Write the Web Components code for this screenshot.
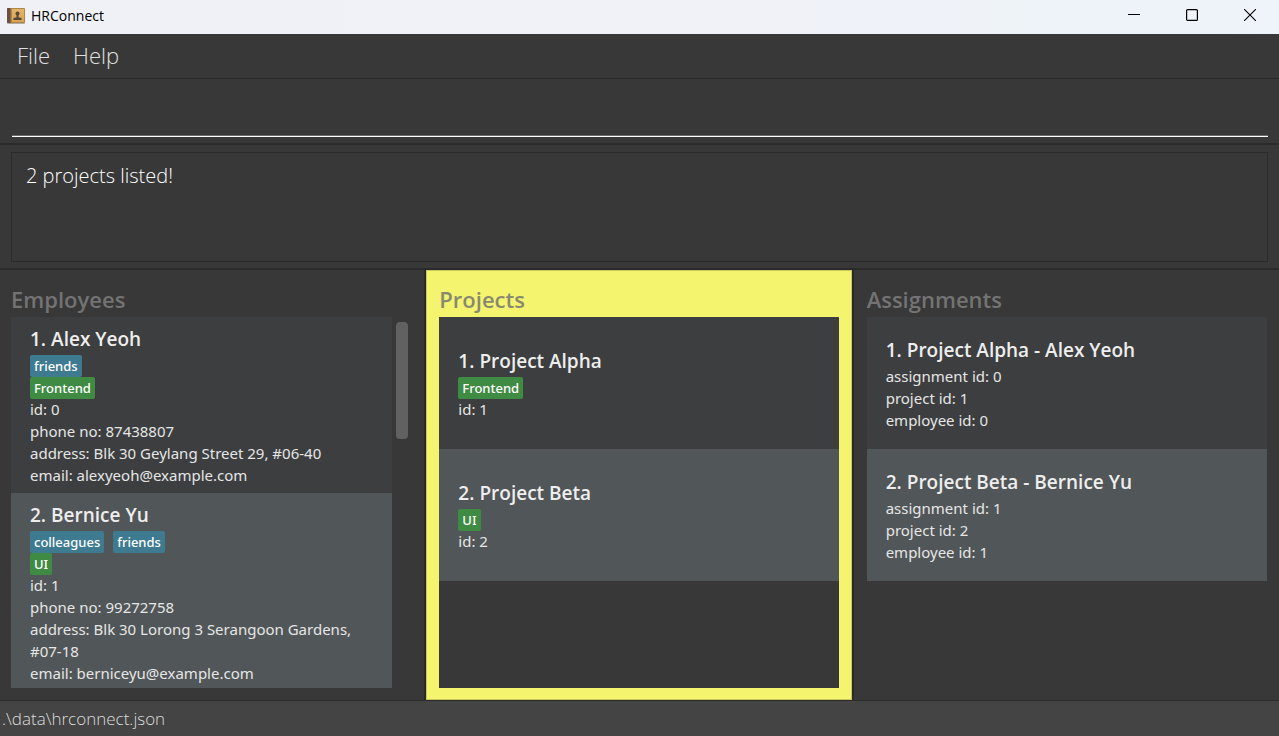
<!DOCTYPE html>
<html lang="en">
<head>
<meta charset="utf-8">
<title>HRConnect</title>
<style>
  html, body { margin: 0; height: 100%; }
  body {
    background: #383838;
    font-family: "Open Sans", "Noto Sans", sans-serif;
    color: #e6e6e6;
  }
</style>
</head>
<body>
<hr-app></hr-app>

<script>
function define(name, html, setup) {
  const template = document.createElement('template');
  template.innerHTML = html;
  customElements.define(name, class extends HTMLElement {
    constructor() {
      super();
      this.attachShadow({ mode: 'open' }).append(template.content.cloneNode(true));
    }
    connectedCallback() {
      if (setup) setup(this, this.shadowRoot);
    }
  });
}

define('hr-titlebar', `
  <style>
    :host { display: flex; align-items: center; height: 34px; flex: none; color: #000;
      background: linear-gradient(90deg, #f0f1f7 0%, #f0f2f8 60%, #edf3f8 85%, #eff3fa 100%); }
    .logo { margin: 0 6px 2px 7px; }
    .name { flex: 1; font-size: 14px; line-height: 20px; margin-bottom: 3px; }
    button { width: 58px; height: 34px; padding: 0 0 4px; border: 0; background: none; display: grid; place-items: center; }
    svg { display: block; }
  </style>
  <svg class="logo" width="18" height="18" viewBox="0 0 18 18" aria-hidden="true">
    <defs><linearGradient id="cover" x1="0" y1="0" x2="0" y2="1"><stop offset="0" stop-color="#e3b568"/><stop offset="1" stop-color="#d9a450"/></linearGradient></defs>
    <rect x="0" y="15" width="18" height="2" rx="1" fill="#b3aca3"/>
    <rect x="0" y="1" width="18" height="15" rx="1" fill="#b08545"/>
    <path d="M1 1h3v15H1a1 1 0 0 1-1-1V2a1 1 0 0 1 1-1z" fill="#6a5142"/>
    <rect x="3" y="1" width="1" height="15" fill="#8a6a48"/>
    <rect x="5" y="2" width="12" height="13" fill="url(#cover)"/>
    <circle cx="10.500" cy="6.500" r="2" fill="#54483a"/>
    <path d="M9.500 8h2v2.200l3 .8v2h-8v-2l3-.8z" fill="#54483a"/>
  </svg>
  <span class="name"><slot></slot></span>
  <button aria-label="Minimize"><svg width="12" height="12" viewBox="0 0 12 12"><path d="M0 5.500h12" stroke="#000"/></svg></button>
  <button aria-label="Maximize"><svg width="12" height="12" viewBox="0 0 12 12"><rect x=".6" y=".6" width="10.800" height="10.800" rx="1" fill="none" stroke="#000" stroke-width="1.200"/></svg></button>
  <button aria-label="Close"><svg width="12" height="12" viewBox="0 0 12 12"><path d="M0 0l12 12M12 0L0 12" stroke="#000" stroke-width="1.100"/></svg></button>
`);

define('hr-menubar', `
  <style>
    :host { display: flex; gap: 23px; align-items: flex-start; box-sizing: border-box; height: 45px; flex: none; padding: 6px 17px 0; border-bottom: 1px solid #2b2b2b; }
    button { border: 0; padding: 0; background: none; color: #e0e0e0; font: 300 22px/30px "Open Sans", sans-serif; }
  </style>
  <button>File</button><button>Help</button>
`);

define('hr-command', `
  <style>
    :host { display: block; flex: none; padding: 7px 11px 6px 12px; border-bottom: 2px solid #2b2b2b; }
    input { display: block; box-sizing: border-box; width: 100%; height: 51px; border: 0; border-bottom: 1px solid #fff; box-shadow: inset 0 -1px #6a6a6a;
      padding: 0 2px; background: none; color: #fff; font: 300 22px/30px "Open Sans", sans-serif; outline: none; }
  </style>
  <input type="text" aria-label="Command">
`);

define('hr-result', `
  <style>
    :host { display: block; flex: none; padding: 7px 11px 6px; border-bottom: 2px solid #2b2b2b; }
    output { display: block; box-sizing: border-box; height: 110px; border: 1px solid #2b2b2b; padding: 8px 14px; color: #fff;
      font-size: 20px; font-weight: 300; line-height: 30px; }
  </style>
  <output><slot></slot></output>
`);

define('hr-panel', `
  <style>
    :host { display: flex; flex-direction: column; min-width: 0; min-height: 0; box-sizing: border-box; padding: 15px 12px 12px 14px; }
    :host([active]) { margin-right: 1px; padding: 15px 13px 12px; background: #f4f46f; box-shadow: inset 0 0 0 1px #c8c85e, 0 0 0 2px #2a2a2a; }
    :host([scrolling]) { padding: 15px 16px 12px 11px; }
    h2 { flex: none; margin: 0 0 4px; font-size: 22px; font-weight: 600; line-height: 28px; color: #737373; }
    :host([active]) h2 { color: #898972; }
    .body { flex: 1; min-height: 0; display: flex; }
    .list { flex: 1; min-width: 0; overflow: hidden; background: #383838; }
    .track { display: none; width: 18px; }
    :host([scrolling]) .track { display: block; }
    .thumb { width: 12px; height: 117px; margin: 5px 0 0 4px; border-radius: 4px; background: #616161; }
  </style>
  <h2></h2>
  <div class="body"><div class="list"><slot></slot></div><div class="track"><div class="thumb"></div></div></div>
`, (host, root) => { root.querySelector('h2').textContent = host.getAttribute('heading'); });

define('hr-card', `
  <style>
    :host { display: flex; flex-direction: column; justify-content: center; box-sizing: border-box; min-height: 132px;
      padding: 7px 19px; background: #3c3e3f; font-family: "Noto Sans", sans-serif; font-size: 15px; line-height: 22px; }
    :host(:nth-child(even)) { background: #515658; }
    h3 { display: flex; gap: 5px; margin: 0; font-family: "Open Sans", sans-serif; font-size: 19px; font-weight: 600; line-height: 30px; color: #eee; }
  </style>
  <h3><span class="num"></span><span class="name"></span></h3>
  <slot></slot>
`, (host, root) => {
  root.querySelector('.num').textContent = host.getAttribute('number') + '.';
  root.querySelector('.name').textContent = host.getAttribute('name');
});

define('hr-tags', `
  <style>:host { display: flex; flex-wrap: wrap; gap: 0 9px; margin: 1px 0 -1px; }</style>
  <slot></slot>
`);

define('hr-tag', `
  <style>
    :host { display: block; height: 22px; padding: 0 4px; border-radius: 2px; background: #3e7b91; color: #fff; font-size: 13px; font-weight: 500; line-height: 22px; }
    :host([skill]) { background: #3f8b43; }
  </style>
  <slot></slot>
`);

define('hr-field', `
  <style>:host { display: block; }</style>
  <slot></slot>
`);

define('hr-statusbar', `
  <style>
    :host { display: block; flex: none; padding: 6px 2px 5px; border-top: 1px solid #2b2b2b; background: #444; color: #ddd;
      font-size: 17px; font-weight: 300; line-height: 24px; }
  </style>
  <slot></slot>
`);

define('hr-app', `
  <style>
    :host { display: flex; flex-direction: column; height: 100vh; overflow: hidden; }
    main { flex: 1; min-height: 0; display: grid; grid-template-columns: repeat(3, minmax(0, 1fr)); grid-template-rows: minmax(0, 1fr); }
  </style>
  <hr-titlebar>HRConnect</hr-titlebar>
  <hr-menubar></hr-menubar>
  <hr-command></hr-command>
  <hr-result>2 projects listed!</hr-result>
  <main>
    <hr-panel heading="Employees" scrolling>
      <hr-card number="1" name="Alex Yeoh">
        <hr-tags><hr-tag>friends</hr-tag></hr-tags>
        <hr-tags><hr-tag skill>Frontend</hr-tag></hr-tags>
        <hr-field>id: 0</hr-field>
        <hr-field>phone no: 87438807</hr-field>
        <hr-field>address: Blk 30 Geylang Street 29, #06-40</hr-field>
        <hr-field>email: alexyeoh@example.com</hr-field>
      </hr-card>
      <hr-card number="2" name="Bernice Yu">
        <hr-tags><hr-tag>colleagues</hr-tag><hr-tag>friends</hr-tag></hr-tags>
        <hr-tags><hr-tag skill>UI</hr-tag></hr-tags>
        <hr-field>id: 1</hr-field>
        <hr-field>phone no: 99272758</hr-field>
        <hr-field>address: Blk 30 Lorong 3 Serangoon Gardens, #07-18</hr-field>
        <hr-field>email: berniceyu@example.com</hr-field>
      </hr-card>
    </hr-panel>
    <hr-panel heading="Projects" active>
      <hr-card number="1" name="Project Alpha">
        <hr-tags><hr-tag skill>Frontend</hr-tag></hr-tags>
        <hr-field>id: 1</hr-field>
      </hr-card>
      <hr-card number="2" name="Project Beta">
        <hr-tags><hr-tag skill>UI</hr-tag></hr-tags>
        <hr-field>id: 2</hr-field>
      </hr-card>
    </hr-panel>
    <hr-panel heading="Assignments">
      <hr-card number="1" name="Project Alpha - Alex Yeoh">
        <hr-field>assignment id: 0</hr-field>
        <hr-field>project id: 1</hr-field>
        <hr-field>employee id: 0</hr-field>
      </hr-card>
      <hr-card number="2" name="Project Beta - Bernice Yu">
        <hr-field>assignment id: 1</hr-field>
        <hr-field>project id: 2</hr-field>
        <hr-field>employee id: 1</hr-field>
      </hr-card>
    </hr-panel>
  </main>
  <hr-statusbar>.\\data\\hrconnect.json</hr-statusbar>
`);
</script>
</body>
</html>
